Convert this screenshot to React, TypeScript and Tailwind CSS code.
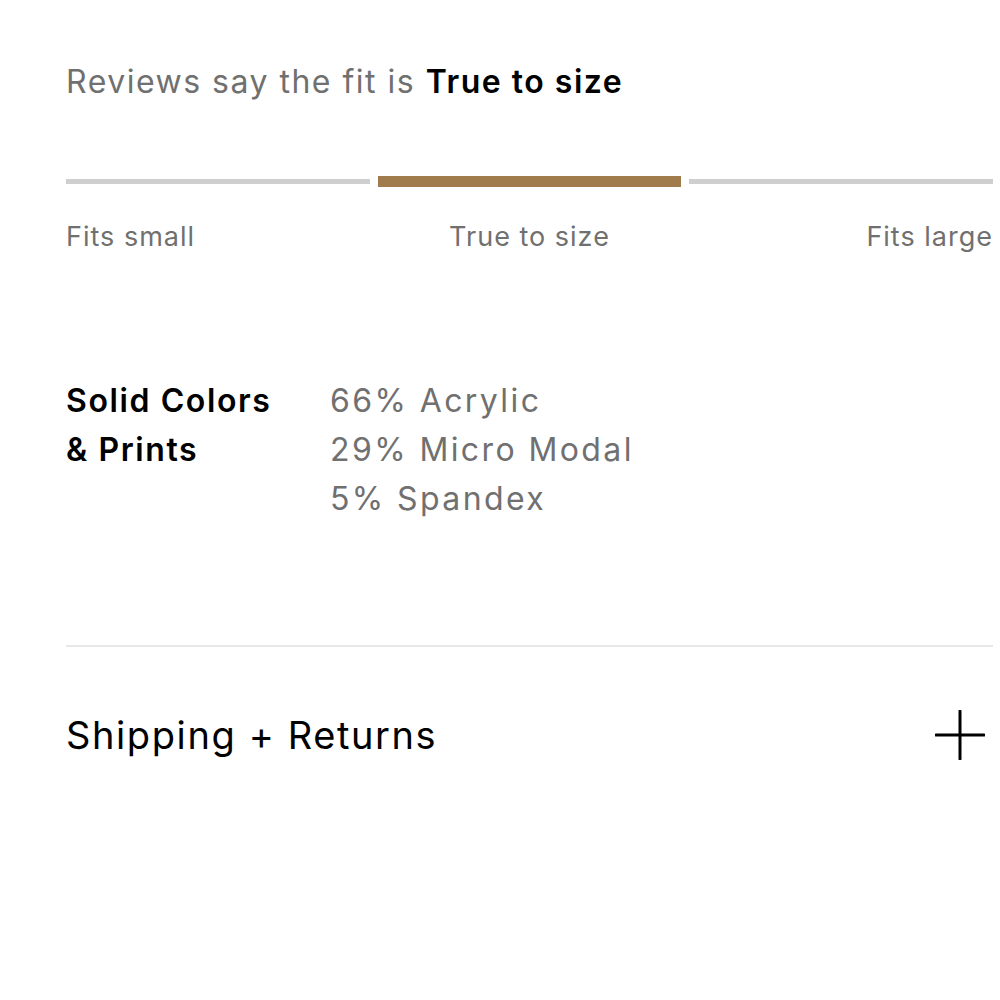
const fitSteps = [
  { label: "Fits small", align: "text-left" },
  { label: "True to size", align: "text-center" },
  { label: "Fits large", align: "text-right" },
];

const materials = ["66% Acrylic", "29% Micro Modal", "5% Spandex"];

export default function App() {
  const active = 1;

  return (
    <div className="min-h-screen bg-white font-['Inter',sans-serif] pl-[66px] pr-[7px]">
      {/* Fit summary */}
      <section className="pt-[62px]">
        <h2 className="text-[32px] leading-[40px] tracking-[1.5px] text-[#707070]">
          Reviews say the fit is <span className="font-semibold text-black">True to size</span>
        </h2>

        <div className="mt-[74px] flex items-center gap-2">
          {fitSteps.map((step, i) => (
            <div
              key={step.label}
              className={
                i === active
                  ? "h-[11px] flex-1 bg-[#a07c4c]"
                  : "h-[5px] flex-1 bg-[#cfcfcf]"
              }
            />
          ))}
        </div>

        <div className="mt-[33px] grid grid-cols-3">
          {fitSteps.map((step) => (
            <span key={step.label} className={`${step.align} text-[27px] leading-[34px] tracking-[1px] text-[#707070]`}>
              {step.label}
            </span>
          ))}
        </div>
      </section>

      {/* Fabric content */}
      <section className="mt-[122px] flex">
        <div className="w-[264px] text-[32px] leading-[49px] font-semibold tracking-[1.6px] text-black">
          Solid Colors
          <br />& Prints
        </div>
        <ul className="text-[32px] leading-[49px] tracking-[2.4px] text-[#707070]">
          {materials.map((m) => (
            <li key={m}>{m}</li>
          ))}
        </ul>
      </section>

      <div className="mt-[122px] h-[2px] bg-[#e8e8e8]" />

      {/* Accordion row */}
      <button className="flex w-full items-center justify-between pt-[63px] text-left">
        <span className="text-[38px] leading-[48px] tracking-[1.6px] text-black">Shipping + Returns</span>
        <svg width="50" height="50" viewBox="0 0 50 50" className="mr-[8px]">
          <path d="M25 1v48M1 25h48" stroke="black" strokeWidth="3" strokeLinecap="round" />
        </svg>
      </button>
    </div>
  );
}
